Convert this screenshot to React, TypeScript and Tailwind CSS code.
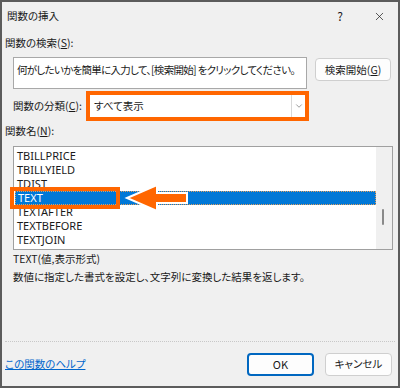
import { ChevronDown, X } from "lucide-react";

const FONT = { fontFamily: '"Segoe UI", "Noto Sans CJK JP", "Noto Sans", sans-serif' };
const LATIN = { fontFamily: '"Noto Sans", "Liberation Sans", sans-serif' };

const functions = ["TBILLPRICE", "TBILLYIELD", "TDIST", "TEXT", "TEXTAFTER", "TEXTBEFORE", "TEXTJOIN"];

export default function App() {
  return (
    <div
      style={FONT}
      className="relative flex h-[388px] w-[400px] flex-col border-2 border-[#5c5c5c] bg-[#f0f0f0] text-[10.5px] leading-[14px] text-[#1a1a1a] [font-feature-settings:'palt']"
    >
      {/* title bar */}
      <div className="flex h-[28px] items-center pl-[5px] pr-[12px]">
        <span>関数の挿入</span>
        <span className="ml-auto mr-[30px] text-[12px]">?</span>
        <X className="h-[13px] w-[13px]" strokeWidth={1.3} />
      </div>

      <div className="mt-[5px] flex h-[16px] items-center pl-[3px]">
        関数の検索(<span className="underline">S</span>):
      </div>

      <div className="mt-[6px] flex items-start pl-[11px]">
        <div className="h-[32px] w-[294px] overflow-hidden whitespace-nowrap border border-[#a8a8a8] bg-white px-[3px] pt-[5px] tracking-[-0.7px]">
          何がしたいかを簡単に入力して、[検索開始] をクリックしてください。
        </div>
        <button className="ml-[8px] mt-[1px] flex h-[23px] w-[76px] items-center justify-center rounded-[4px] border border-[#cfcfcf] bg-[#fdfdfd]">
          検索開始(<span className="underline">G</span>)
        </button>
      </div>

      <div className="mt-[2px] flex items-center pl-[11px]">
        <span className="w-[73px]">
          関数の分類(<span className="underline">C</span>):
        </span>
        <div className="flex h-[30px] w-[223px] border-4 border-[#ff6600] bg-white">
          <span className="flex flex-1 items-center pl-[4px]">すべて表示</span>
          <span className="flex w-[14px] items-center justify-center border-l border-[#d8d8d8]">
            <ChevronDown className="h-[10px] w-[10px] text-[#606060]" strokeWidth={1.5} />
          </span>
        </div>
      </div>

      <div className="mt-[2px] flex h-[16px] items-center pl-[3px]">
        関数名(<span className="underline">N</span>):
      </div>

      <div className="relative ml-[11px] mt-[7px] flex h-[104px] w-[380px] border border-[#a0a0a0] bg-white">
        <div style={LATIN} className="flex flex-1 flex-col pt-[2px] text-[11px] leading-[14px]">
          {functions.map((f) => (
            <div
              key={f}
              className={
                f === "TEXT"
                  ? "ml-[1px] flex h-[14px] items-center border border-dotted border-[#e0a060] bg-[#0078d7] pl-[2px] text-white"
                  : "flex h-[14px] items-center pl-[3px]"
              }
            >
              {f}
            </div>
          ))}
        </div>
        <div className="relative w-[16px] bg-[#f0f0f0]">
          <div className="absolute left-[6px] top-[62px] h-[16px] w-[2px] rounded-full bg-[#8a8a8a]" />
        </div>

        {/* annotation: box around TEXT */}
        <div className="absolute left-[-4px] top-[40px] h-[22px] w-[110px] border-4 border-[#ff6600]" />
        {/* annotation: arrow */}
        <svg className="absolute left-[110px] top-[37px]" width="80" height="30" viewBox="0 0 80 30">
          <polygon
            points="3,14 33,1 33,9 63,9 63,19 33,19 33,27"
            fill="#ff6600"
            stroke="#ffffff"
            strokeWidth="2"
            strokeLinejoin="miter"
          />
        </svg>
      </div>

      <div className="mt-[1px] flex h-[16px] items-center pl-[11px]">TEXT(値,表示形式)</div>
      <div className="mt-[2px] flex h-[16px] items-center pl-[11px]">
        数値に指定した書式を設定し、文字列に変換した結果を返します。
      </div>

      <div className="mx-[3px] mt-auto border-t border-dotted border-[#c8c8c8]" />

      <div className="flex h-[44px] items-center pl-[3px] pr-[6px]">
        <a className="text-[#0066cc] underline" href="#">
          この関数のヘルプ
        </a>
        <button className="ml-auto flex h-[23px] w-[67px] items-center justify-center rounded-[4px] border-2 border-[#0067c0] bg-[#fdfdfd] text-[11px]">
          OK
        </button>
        <button className="ml-[11px] flex h-[23px] w-[67px] items-center justify-center rounded-[4px] border border-[#cfcfcf] bg-[#fdfdfd]">
          キャンセル
        </button>
      </div>
    </div>
  );
}
